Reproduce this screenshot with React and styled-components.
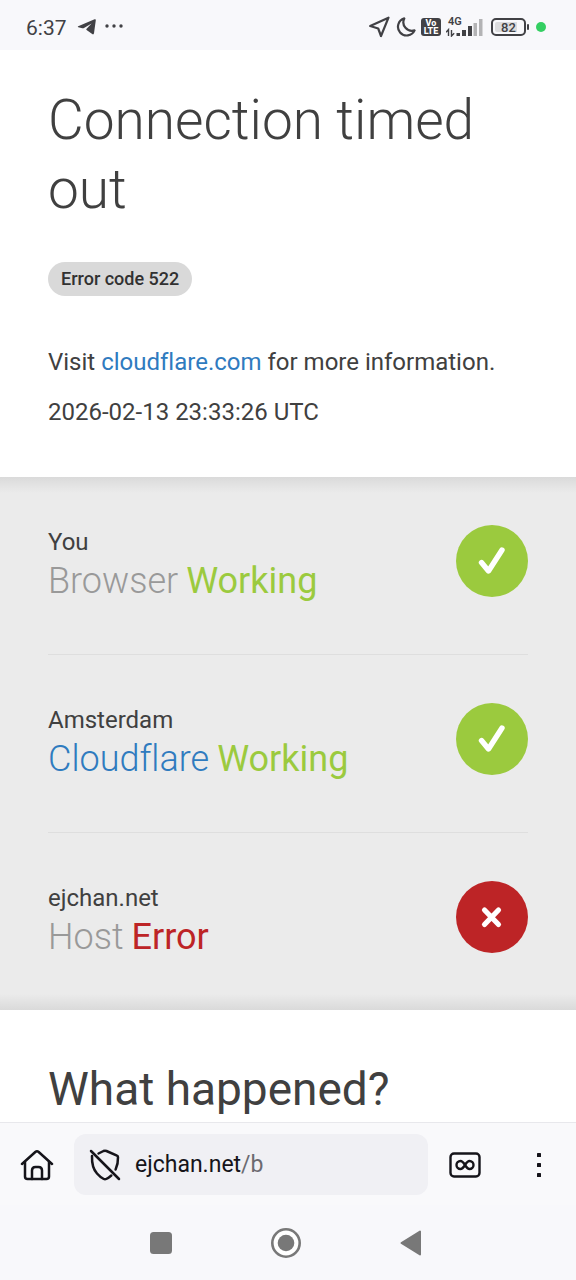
import React from 'react'
import styled, { createGlobalStyle } from 'styled-components'

const statuses = [
    { id: 1, place: 'You', name: 'Browser', state: 'Working', ok: true },
    { id: 2, place: 'Amsterdam', name: 'Cloudflare', state: 'Working', ok: true, href: '#cloudflare' },
    { id: 3, place: 'ejchan.net', name: 'Host', state: 'Error', ok: false },
]

const StatusIcon = ({ ok }) => (
    <Badge viewBox="0 0 72 72" role="img" aria-label={ok ? 'ok' : 'failed'}>
        <circle cx="36" cy="36" r="36" fill={ok ? '#9bca3e' : '#bd2426'} />
        {ok
            ? <path d="M25.5 37.5L32.5 46L46 25" fill="none" stroke="#fff" strokeWidth="5.4" strokeLinecap="round" strokeLinejoin="round" />
            : <path d="M28.5 29L42.5 43.5M42.5 29L28.5 43.5" fill="none" stroke="#fff" strokeWidth="5.2" strokeLinecap="round" />}
    </Badge>
)

const SystemBar = () => (
    <TopBar>
        <TopGroup $gap={8}>
            <Clock>6:37</Clock>
            <svg width="20" height="18" viewBox="0 0 20 18">
                <path d="M1.2 8.2L17.6 1.3Q19 .9 18.8 2.3L17 15.3Q16.6 17 15.2 16.1L9.6 12.1Q8.8 11.5 9.6 10.8L14.6 5.6L7 10Q6.2 10.5 5.3 10.2L1.3 9.2Q.2 8.8 1.2 8.2Z" fill="#414145" />
            </svg>
            <svg width="18" height="18" viewBox="0 0 18 18" fill="#414145">
                <circle cx="2" cy="8" r="1.7" />
                <circle cx="9" cy="8" r="1.7" />
                <circle cx="16" cy="8" r="1.7" />
            </svg>
        </TopGroup>
        <TopGroup $gap={5}>
            <svg width="22" height="22" viewBox="0 0 22 22">
                <path d="M1.2 10L19.5 1.7L12 20L9.2 12.5Z" fill="none" stroke="#414145" strokeWidth="2.2" strokeLinejoin="round" />
            </svg>
            <svg width="20" height="20" viewBox="0 0 20 20">
                <path d="M8.3 1.4A8.7 8.7 0 1 0 18.600 13.4A8.6 8.6 0 0 1 8.3 1.4Z" fill="none" stroke="#414145" strokeWidth="2.2" strokeLinejoin="round" />
            </svg>
            <Volte><span>Vo</span><span>LTE</span></Volte>
            <Signal>
                <span>4G</span>
                <svg width="37" height="20" viewBox="0 0 37 20">
                    <path d="M2.500 19V13M0 15.300L2.500 12.500V15.300M5.500 13V19M8.200 16.200L5.500 19V16.200" fill="none" stroke="#414145" strokeWidth="1.400" />
                    <g fill="#414145">
                        <rect x="10.500" y="16" width="3.500" height="3" />
                        <rect x="16" y="13" width="4" height="6" />
                        <rect x="22" y="9" width="4" height="10" />
                    </g>
                    <g fill="#b3b3b5">
                        <rect x="27.500" y="6" width="3.500" height="13" />
                        <rect x="33" y="2" width="3.500" height="17" />
                    </g>
                </svg>
            </Signal>
            <Battery><Level>82</Level></Battery>
            <Dot />
        </TopGroup>
    </TopBar>
)

export default function App() {
  return (
      <Screen>
        <Global />
        <SystemBar />
        <Page>
            <Header>
                <Title>Connection timed out</Title>
                <Code>Error code 522</Code>
                <Text>Visit <Anchor href="#info">cloudflare.com</Anchor> for more information.</Text>
                <Text>2026-02-13 23:33:26 UTC</Text>
            </Header>
            <Panel>
                {statuses.map((props) =>{
                    return (
                        <Row key={props.id}>
                            <div>
                                <Place>{props.place}</Place>
                                <Status>
                                    {props.href ? <Anchor href={props.href}>{props.name}</Anchor> : <span>{props.name}</span>}
                                    <State $ok={props.ok}>{props.state}</State>
                                </Status>
                            </div>
                            <StatusIcon ok={props.ok} />
                        </Row>
                    )
                })}
            </Panel>
            <Details>
                <h2>What happened?</h2>
            </Details>
        </Page>
        <Toolbar>
            <IconButton aria-label="Home">
                <svg width="34" height="32" viewBox="0 0 34 32" fill="none" stroke="#15141a" strokeWidth="2.500" strokeLinecap="round" strokeLinejoin="round">
                    <path d="M2 15L15.300 3Q17 1.600 18.700 3L32 15" />
                    <path d="M5 13V27.500Q5 30 7.500 30H26.500Q29 30 29 27.500V13" />
                    <path d="M12 30V21.500Q12 18 15.500 18H18.500Q22 18 22 21.500V30" />
                </svg>
            </IconButton>
            <Address aria-label="Address ejchan.net/b">
                <svg width="32" height="32" viewBox="0 0 32 32" fill="none" stroke="#15141a" strokeWidth="2.500" strokeLinecap="round" strokeLinejoin="round">
                    <path d="M2 2L30 30" />
                    <path d="M9.500 4.500L14.500 2Q16 1.400 17.500 2L28 6.600Q29 7 29 8.200Q29.200 15 26.600 20.500" />
                    <path d="M3 7Q2.600 18.500 8 24.500Q11 28 14.800 30Q16 30.600 17.200 30Q19.800 28.700 22.300 26.500" />
                </svg>
                <span>ejchan.net<Path>/b</Path></span>
            </Address>
            <IconButton aria-label="Tabs">
                <svg width="32" height="26" viewBox="0 0 32 26" fill="none" stroke="#15141a" strokeWidth="2.400">
                    <rect x="1.500" y="1.500" width="29" height="23" rx="3.500" />
                    <path d="M16 13C14 9.800 13 9 11.500 9A4 4 0 0 0 11.500 17C13 17 14 16.200 16 13C18 9.800 19 9 20.500 9A4 4 0 0 1 20.500 17C19 17 18 16.200 16 13Z" />
                </svg>
            </IconButton>
            <IconButton aria-label="Menu">
                <svg width="6" height="26" viewBox="0 0 6 26" fill="#15141a">
                    <rect x="1" y="1" width="4" height="4" rx=".6" />
                    <rect x="1" y="11" width="4" height="4" rx=".6" />
                    <rect x="1" y="21" width="4" height="4" rx=".6" />
                </svg>
            </IconButton>
        </Toolbar>
        <NavBar>
            <IconButton aria-label="Recent apps">
                <svg width="22" height="22" viewBox="0 0 22 22"><rect width="22" height="22" rx="3.500" fill="#787878" /></svg>
            </IconButton>
            <IconButton aria-label="Home screen">
                <svg width="30" height="30" viewBox="0 0 30 30">
                    <circle cx="15" cy="15" r="13.700" fill="#fff" stroke="#787878" strokeWidth="2.600" />
                    <circle cx="15" cy="15" r="8.300" fill="#787878" />
                </svg>
            </IconButton>
            <IconButton aria-label="Back">
                <svg width="22" height="26" viewBox="0 0 22 26">
                    <path d="M1.500 13L20 1.500V24.500Z" fill="#787878" stroke="#787878" strokeWidth="2" strokeLinejoin="round" />
                </svg>
            </IconButton>
        </NavBar>
      </Screen>
  )
}

const Global = createGlobalStyle`
    *{
        box-sizing: border-box;
    }

    body{
        margin: 0;
        font-family: Roboto, sans-serif;
        font-variant-ligatures: none;
        color: #404040;
        background-color: #fff;
    }

    h1, h2, p{
        margin: 0;
    }

    svg{
        display: block;
        flex: none;
    }
`;

const Screen = styled.div`
    display: flex;
    flex-direction: column;
    height: 100vh;
`;

const TopBar = styled.div`
    display: flex;
    justify-content: space-between;
    align-items: center;
    padding: 4px 30px 0 26px;
    height: 50px;
    flex: none;
    background-color: #f8f8fb;
    color: #414145;
`;
const TopGroup = styled.div`
    display: flex;
    align-items: center;
    gap: ${({ $gap }) => $gap}px;
`;
const Clock = styled.span`
    font-size: 21px;
    line-height: 24px;
    padding-top: 2px;
    margin-right: 2px;
`;
const Volte = styled.span`
    display: flex;
    flex-direction: column;
    align-items: center;
    justify-content: center;
    width: 20px;
    height: 18px;
    border-radius: 3px;
    background-color: #414145;
    color: #fff;
    font-size: 9px;
    font-weight: 800;
    line-height: 8px;
`;
const Signal = styled.span`
    position: relative;

    span{
        position: absolute;
        left: 2px;
        top: 0;
        font-size: 11px;
        font-weight: 600;
        line-height: 10px;
    }
`;
const Battery = styled.span`
    position: relative;
    display: flex;
    width: 35px;
    height: 18px;
    margin-left: 3px;
    padding: 2px;
    border: 2px solid #414145;
    border-radius: 5px;

    &::after{
        content: '';
        position: absolute;
        right: -5px;
        top: 4px;
        width: 2px;
        height: 6px;
        border-radius: 1px;
        background-color: #414145;
    }
`;
const Level = styled.span`
    flex: 1;
    border-radius: 2px;
    background: linear-gradient(to right, #dcdcde 82%, transparent 82%);
    font-size: 13px;
    font-weight: 500;
    line-height: 11px;
    text-align: center;
`;
const Dot = styled.span`
    width: 10px;
    height: 10px;
    margin-left: 5px;
    border-radius: 50%;
    background-color: #34cf62;
`;

const Page = styled.main`
    flex: 1;
    min-height: 0;
    overflow-y: auto;
    scrollbar-width: none;
`;
const Header = styled.header`
    padding: 36px 48px 47px;
`;
const Title = styled.h1`
    font-size: 55px;
    font-weight: 300;
    line-height: 69px;
`;
const Code = styled.span`
    display: inline-block;
    margin: 38px 0 48px;
    padding: 0 13px;
    border-radius: 17px;
    background-color: #d9d9d9;
    color: #313131;
    font-size: 18px;
    font-weight: 500;
    line-height: 34px;
`;
const Text = styled.p`
    font-size: 24px;
    line-height: 36px;

    & + &{
        margin-top: 14px;
    }
`;
const Anchor = styled.a`
    color: #2f7bbf;
    text-decoration: none;
`;

const Panel = styled.section`
    padding: 0 48px;
    background-color: #ebebeb;
    background-image: linear-gradient(to bottom, #dadada, #ebebeb00 16px), linear-gradient(to top, #dadada, #ebebeb00 16px);
`;
const Row = styled.div`
    display: flex;
    justify-content: space-between;
    align-items: flex-start;
    padding: 48px 0 50px;

    & + &{
        border-top: 1px solid #dedede;
    }
`;
const Place = styled.p`
    font-size: 24px;
    line-height: 34px;
`;
const Status = styled.p`
    display: flex;
    flex-wrap: wrap;
    gap: 8px;
    color: #999;
    font-size: 36px;
    font-weight: 300;
    line-height: 45px;
`;
const State = styled.span`
    color: ${({ $ok }) => ($ok ? '#9bca3e' : '#bd2426')};
    font-weight: 400;
`;
const Badge = styled.svg`
    width: 72px;
    height: 72px;
`;

const Details = styled.section`
    padding: 48px 48px 0;

    h2{
        font-size: 46px;
        font-weight: 400;
        line-height: 62px;
    }
`;

const Toolbar = styled.div`
    display: flex;
    align-items: center;
    flex: none;
    padding: 11px 0 10px;
    border-top: 1px solid #e8e8ec;
    background-color: #f9f9fb;
`;
const IconButton = styled.button`
    display: flex;
    align-items: center;
    justify-content: center;
    width: 74px;
    height: 60px;
    padding: 0;
    border: none;
    background-color: transparent;
`;
const Address = styled.button`
    display: flex;
    align-items: center;
    flex: 1;
    gap: 14px;
    height: 61px;
    padding: 0 15px;
    border: none;
    border-radius: 12px;
    background-color: #f0f0f4;
    color: #15141a;
    font-family: inherit;
    font-size: 23px;
    line-height: 32px;

    span{
        padding-top: 1px;
    }
`;
const Path = styled.span`
    color: #6b6a70;
`;
const NavBar = styled.nav`
    display: flex;
    align-items: center;
    justify-content: center;
    gap: 51px;
    flex: none;
    height: 75px;
    padding-right: 4px;
    background-color: #f8f8fb;
`;
